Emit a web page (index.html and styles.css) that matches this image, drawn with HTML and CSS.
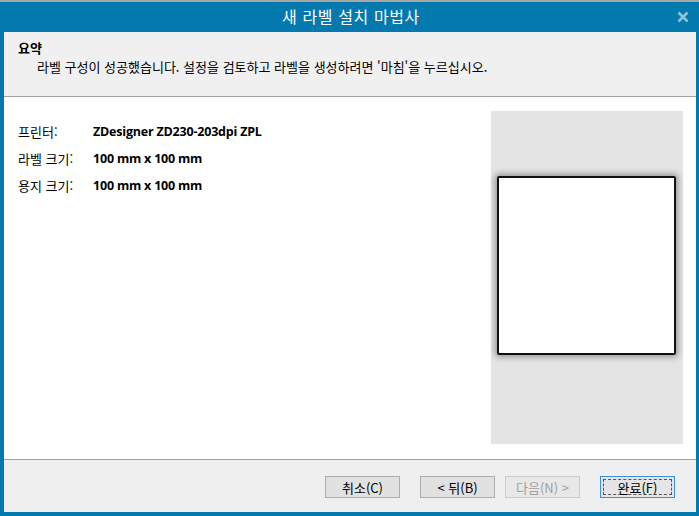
FILE: index.html
```html
<!DOCTYPE html>
<html lang="ko">
<head>
<meta charset="utf-8">
<link rel="stylesheet" href="styles.css">
</head>
<body>
<div class="topstrip"></div>
<div class="window">
  <div class="titlebar">
    <span class="title">새 라벨 설치 마법사</span>
    <svg class="close" width="12" height="12" viewBox="0 0 12 12"><path d="M1.5 1.5 L10.5 10.5 M10.5 1.5 L1.5 10.5" stroke="#8ec3dd" stroke-width="2.6" stroke-linecap="butt"/></svg>
  </div>
  <div class="client">
    <div class="header">
      <div class="h-title">요약</div>
      <div class="h-sub">라벨 구성이 성공했습니다. 설정을 검토하고 라벨을 생성하려면 '마침'을 누르십시오.</div>
    </div>
    <div class="main">
      <div class="details">
        <div class="row"><span class="lbl">프린터:</span><span class="val">ZDesigner ZD230-203dpi ZPL</span></div>
        <div class="row"><span class="lbl">라벨 크기:</span><span class="val">100 mm x 100 mm</span></div>
        <div class="row"><span class="lbl">용지 크기:</span><span class="val">100 mm x 100 mm</span></div>
      </div>
      <div class="preview">
        <div class="paper"></div>
      </div>
    </div>
    <div class="footer">
      <button class="btn">취소(C)</button>
      <button class="btn back">&lt; 뒤(B)</button>
      <button class="btn disabled">다음(N) &gt;</button>
      <button class="btn default"><span class="focus">완료(F)</span></button>
    </div>
  </div>
</div>
</body>
</html>
```
FILE: styles.css
```css
html, body {
  margin: 0;
  padding: 0;
  width: 699px;
  height: 516px;
  overflow: hidden;
  background: #ffffff;
  font-family: "Segoe UI", "Noto Sans", "Noto Sans CJK KR", sans-serif;
}
.topstrip {
  height: 2px;
  background: #a6a6a6;
}
.window {
  height: 514px;
  box-sizing: border-box;
  background: #0479ad;
  padding: 0 3px 4px 4px;
  display: flex;
  flex-direction: column;
}
.titlebar {
  height: 30px;
  flex: none;
  display: flex;
  align-items: center;
  justify-content: center;
  position: relative;
}
.title {
  color: #ffffff;
  font-family: "Noto Sans CJK KR", sans-serif;
  font-size: 16px;
  letter-spacing: 0.6px;
  margin-left: 2px;
  margin-top: -2px;
}
.close {
  position: absolute;
  right: 7px;
  top: 9px;
}
.client {
  flex: 1;
  display: flex;
  flex-direction: column;
  background: #ffffff;
}
.header {
  height: 65px;
  flex: none;
  box-sizing: border-box;
  background: #f0f0f0;
  border-bottom: 1px solid #a0a0a0;
  padding: 6px 0 0 14px;
  font-family: "Noto Sans CJK KR", sans-serif;
  font-size: 13px;
  color: #000;
}
.h-title {
  font-weight: bold;
  line-height: 19px;
}
.h-sub {
  padding-left: 19px;
  line-height: 19px;
}
.main {
  flex: 1;
  display: flex;
  justify-content: space-between;
  padding: 14px 13px 15px 14px;
}
.details {
  padding-top: 12px;
}
.row {
  display: flex;
  height: 27px;
  align-items: flex-start;
  font-size: 13px;
}
.lbl {
  width: 75px;
  font-family: "Noto Sans CJK KR", sans-serif;
  color: #000;
  line-height: 18px;
}
.val {
  font-family: "Open Sans", sans-serif;
  font-weight: bold;
  font-size: 12.5px;
  letter-spacing: -0.2px;
  color: #000;
  line-height: 18px;
}
.preview {
  width: 192px;
  background: #e4e4e4;
  padding: 65px 0 0 6px;
  box-sizing: border-box;
}
.paper {
  width: 175px;
  height: 175px;
  background: #fff;
  border: 2px solid #111;
  border-radius: 2px;
  box-shadow: 0 0 6px 2px rgba(0,0,0,0.35);
}
.footer {
  height: 53px;
  flex: none;
  box-sizing: border-box;
  background: #efefef;
  border-top: 1px solid #a0a0a0;
  display: flex;
  align-items: flex-start;
  padding: 16px 0 0 321px;
}
.btn {
  width: 75px;
  height: 22px;
  box-sizing: border-box;
  border: 1px solid #adadad;
  background: #e1e1e1;
  font-family: "Noto Sans CJK KR", sans-serif;
  font-size: 13px;
  color: #000;
  padding: 0;
  margin: 0 20px 0 0;
  line-height: 19px;
}
.btn.back { margin-right: 10px; }
.btn.disabled {
  color: #a0a0a0;
  border-color: #cccccc;
  background: #e8e8e8;
}
.btn.default {
  border-color: #3c8fe0;
  background: #e5e5e5;
  padding: 2px;
}
.focus {
  display: block;
  height: 100%;
  box-sizing: border-box;
  border: 1px dashed #555;
  line-height: 15px;
}
```
